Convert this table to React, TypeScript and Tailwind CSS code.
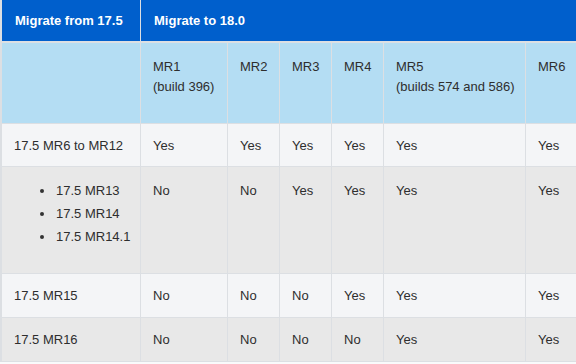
import React from "react";

const cols = "grid grid-cols-[138px_86px_51px_51px_51px_141px_1fr] gap-x-px";

type Row = {
  from: string | string[];
  cells: string[];
  tone: "light" | "dark";
  h: string;
};

const rows: Row[] = [
  { from: "17.5 MR6 to MR12", cells: ["Yes", "Yes", "Yes", "Yes", "Yes", "Yes"], tone: "light", h: "h-[42px]" },
  { from: ["17.5 MR13", "17.5 MR14", "17.5 MR14.1"], cells: ["No", "No", "Yes", "Yes", "Yes", "Yes"], tone: "dark", h: "h-[106px]" },
  { from: "17.5 MR15", cells: ["No", "No", "No", "Yes", "Yes", "Yes"], tone: "light", h: "h-[43px]" },
  { from: "17.5 MR16", cells: ["No", "No", "No", "No", "Yes", "Yes"], tone: "dark", h: "h-[43px]" },
];

const versions = [
  ["MR1", "(build 396)"],
  ["MR2"],
  ["MR3"],
  ["MR4"],
  ["MR5", "(builds 574 and 586)"],
  ["MR6"],
];

export default function App() {
  return (
    <div className="w-[576px] h-[364px] overflow-hidden bg-[#f9fafb] font-['Liberation_Sans',Arial,sans-serif] text-[13px] leading-5 text-[#2e2e2e]">
      <div className="bg-[#dcdfe3] pl-[2px] pb-px flex flex-col gap-px">
        <div className={`${cols} h-[41px] mb-px`}>
          <div className="bg-[#005fcc] text-white font-bold flex items-center pl-[13px]">
            Migrate from 17.5
          </div>
          <div className="col-span-6 bg-[#005fcc] text-white font-bold flex items-center pl-[13px]">
            Migrate to 18.0
          </div>
        </div>

        <div className={`${cols} h-[80px]`}>
          <div className="bg-[#b4ddf3]" />
          {versions.map((v) => (
            <div key={v[0]} className="bg-[#b4ddf3] pl-[12px] pt-[14px]">
              {v.map((line) => (
                <div key={line}>{line}</div>
              ))}
            </div>
          ))}
        </div>

        {rows.map((r, i) => {
          const bg = r.tone === "light" ? "bg-[#f4f5f7]" : "bg-[#e8e8e8]";
          const tall = Array.isArray(r.from);
          const cell = tall
            ? `${bg} pl-[12px] pt-[14px]`
            : `${bg} pl-[12px] pt-px flex items-center`;
          return (
            <div key={i} className={`${cols} ${r.h}`}>
              <div className={cell}>
                {Array.isArray(r.from) ? (
                  <ul className="flex flex-col gap-[3px]">
                    {r.from.map((item) => (
                      <li key={item} className="flex items-center">
                        <span className="ml-[26px] size-[4px] rounded-full bg-[#333]" />
                        <span className="ml-[12px]">{item}</span>
                      </li>
                    ))}
                  </ul>
                ) : (
                  r.from
                )}
              </div>
              {r.cells.map((c, j) => (
                <div key={j} className={cell}>
                  {c}
                </div>
              ))}
            </div>
          );
        })}
      </div>
    </div>
  );
}
